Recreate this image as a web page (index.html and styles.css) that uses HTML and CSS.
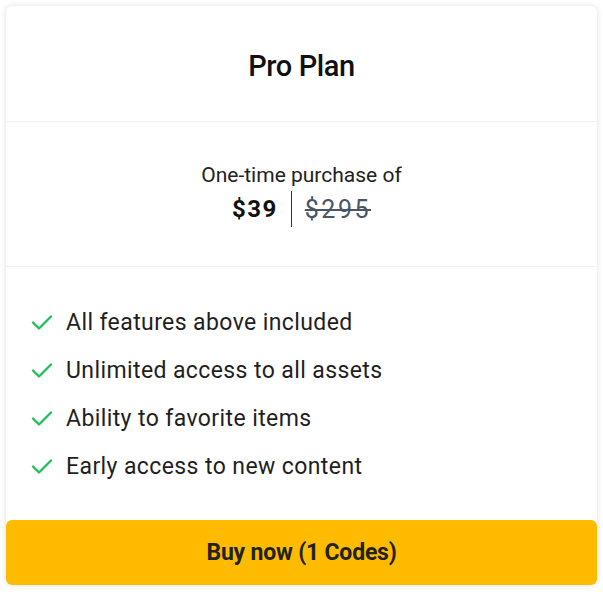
FILE: index.html
```html
<!DOCTYPE html>
<html>
<head>
<meta charset="utf-8">
<link rel="stylesheet" href="styles.css">
</head>
<body>
<div class="card">
  <div class="head">
    <h2 class="title">Pro Plan</h2>
  </div>
  <div class="price">
    <div class="price-label">One-time purchase of</div>
    <div class="price-row">
      <span class="now">$39</span>
      <span class="sep"></span>
      <span class="old">$295</span>
    </div>
  </div>
  <ul class="features">
    <li><svg class="check" viewBox="0 0 24 24"><path d="M3 12.5l6 6L21 6.5"/></svg>All features above included</li>
    <li><svg class="check" viewBox="0 0 24 24"><path d="M3 12.5l6 6L21 6.5"/></svg>Unlimited access to all assets</li>
    <li><svg class="check" viewBox="0 0 24 24"><path d="M3 12.5l6 6L21 6.5"/></svg>Ability to favorite items</li>
    <li><svg class="check" viewBox="0 0 24 24"><path d="M3 12.5l6 6L21 6.5"/></svg>Early access to new content</li>
  </ul>
  <button class="buy">Buy now (1 Codes)</button>
</div>
</body>
</html>
```
FILE: styles.css
```css
html, body {
  margin: 0;
  padding: 0;
  background: #ffffff;
}
body {
  padding: 6px;
  font-family: Roboto, "Liberation Sans", sans-serif;
  color: #1f1f1f;
}
.card {
  width: 591px;
  height: 579px;
  box-sizing: border-box;
  background: #fff;
  border-radius: 6px;
  box-shadow: 0 0 6px rgba(0, 0, 0, 0.13);
  display: flex;
  flex-direction: column;
}
.head {
  height: 115px;
  display: flex;
  align-items: center;
  justify-content: center;
  border-bottom: 1px solid #f1f1f1;
}
.title {
  margin: 0;
  padding-top: 5px;
  font-size: 29px;
  font-weight: 500;
  color: #111;
  letter-spacing: -0.4px;
}
.price {
  height: 145px;
  border-bottom: 1px solid #f1f1f1;
  display: flex;
  flex-direction: column;
  align-items: center;
  justify-content: center;
  gap: 4px;
  padding-top: 2px;
  box-sizing: border-box;
}
.price-label {
  font-size: 21px;
  color: #222;
}
.price-row {
  display: flex;
  align-items: center;
  gap: 13px;
}
.now {
  font-size: 24px;
  font-weight: 700;
  color: #111;
  letter-spacing: 1.5px;
}
.sep {
  width: 1px;
  height: 36px;
  background: #333;
}
.old {
  font-size: 25px;
  color: #4a5566;
  letter-spacing: 2.5px;
  text-decoration: line-through;
  text-decoration-thickness: 2px;
}
.features {
  list-style: none;
  margin: 0;
  padding: 31px 0 0 24px;
  flex: 1;
  display: flex;
  flex-direction: column;
}
.features li {
  height: 48px;
  display: flex;
  align-items: center;
  font-size: 23px;
  letter-spacing: 0.4px;
  color: #1f1f1f;
}
.check {
  width: 24px;
  height: 24px;
  margin-right: 12px;
  fill: none;
  stroke: #22c05a;
  stroke-width: 2.4;
  stroke-linecap: round;
  stroke-linejoin: round;
}
.buy {
  height: 65px;
  border: none;
  border-radius: 6px;
  background: #ffbb00;
  font-family: Roboto, "Liberation Sans", sans-serif;
  font-size: 23px;
  font-weight: 700;
  color: #222;
  letter-spacing: -0.2px;
  cursor: pointer;
}
```
